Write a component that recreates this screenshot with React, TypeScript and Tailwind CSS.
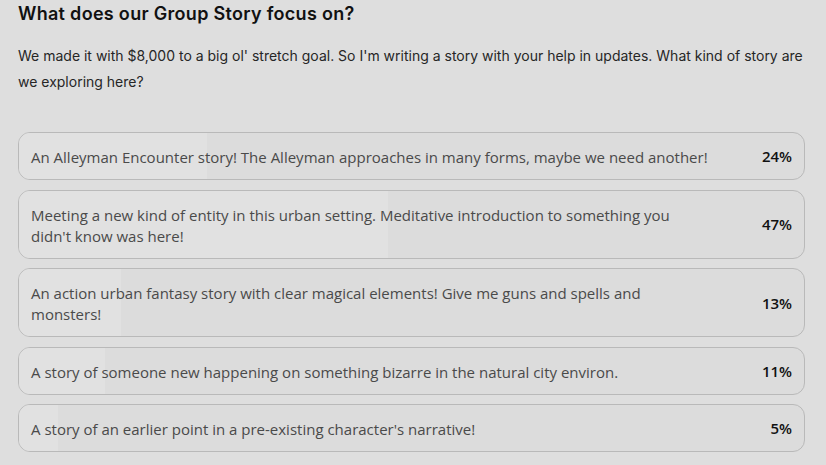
import React from "react";

const options = [
  { text: "An Alleyman Encounter story! The Alleyman approaches in many forms, maybe we need another!", pct: 24 },
  { text: "Meeting a new kind of entity in this urban setting. Meditative introduction to something you didn't know was here!", pct: 47 },
  { text: "An action urban fantasy story with clear magical elements! Give me guns and spells and monsters!", pct: 13 },
  { text: "A story of someone new happening on something bizarre in the natural city environ.", pct: 11 },
  { text: "A story of an earlier point in a pre-existing character's narrative!", pct: 5 },
];

export default function App() {
  return (
    <div className="w-[826px] h-[465px] overflow-hidden bg-[#dedede] px-[18px] pt-[1px]" style={{ fontFamily: "Inter, 'Noto Sans', sans-serif" }}>
      <h1 className="text-[18px] leading-[26px] font-semibold text-[#111] tracking-[0.3px]">What does our Group Story focus on?</h1>
      <p className="mt-[16px] text-[14px] leading-[26px] text-[#262626]">
        We made it with $8,000 to a big ol' stretch goal. So I'm writing a story with your help in updates. What kind of story are we exploring here?
      </p>
      <div className="mt-[37px] flex flex-col gap-[9.5px] w-[787px]">
        {options.map((o) => (
          <div key={o.pct} className="relative overflow-hidden rounded-[12px] border border-[#b9b9b9] bg-[#dcdcdc]">
            <div className="absolute inset-y-0 left-0 bg-[#e1e1e1]" style={{ width: `${o.pct}%` }} />
            <div className="relative flex items-center justify-between gap-6 px-[12px] pt-[12.5px] pb-[11px]" style={{ fontFamily: "'Open Sans', 'Noto Sans', sans-serif" }}>
              <span className="pt-[1.5px] text-[15px] leading-[21px] text-[#4a4a4a] max-w-[680px]">{o.text}</span>
              <span className="text-[15px] leading-[21px] font-semibold text-[#111]">{o.pct}%</span>
            </div>
          </div>
        ))}
      </div>
    </div>
  );
}
